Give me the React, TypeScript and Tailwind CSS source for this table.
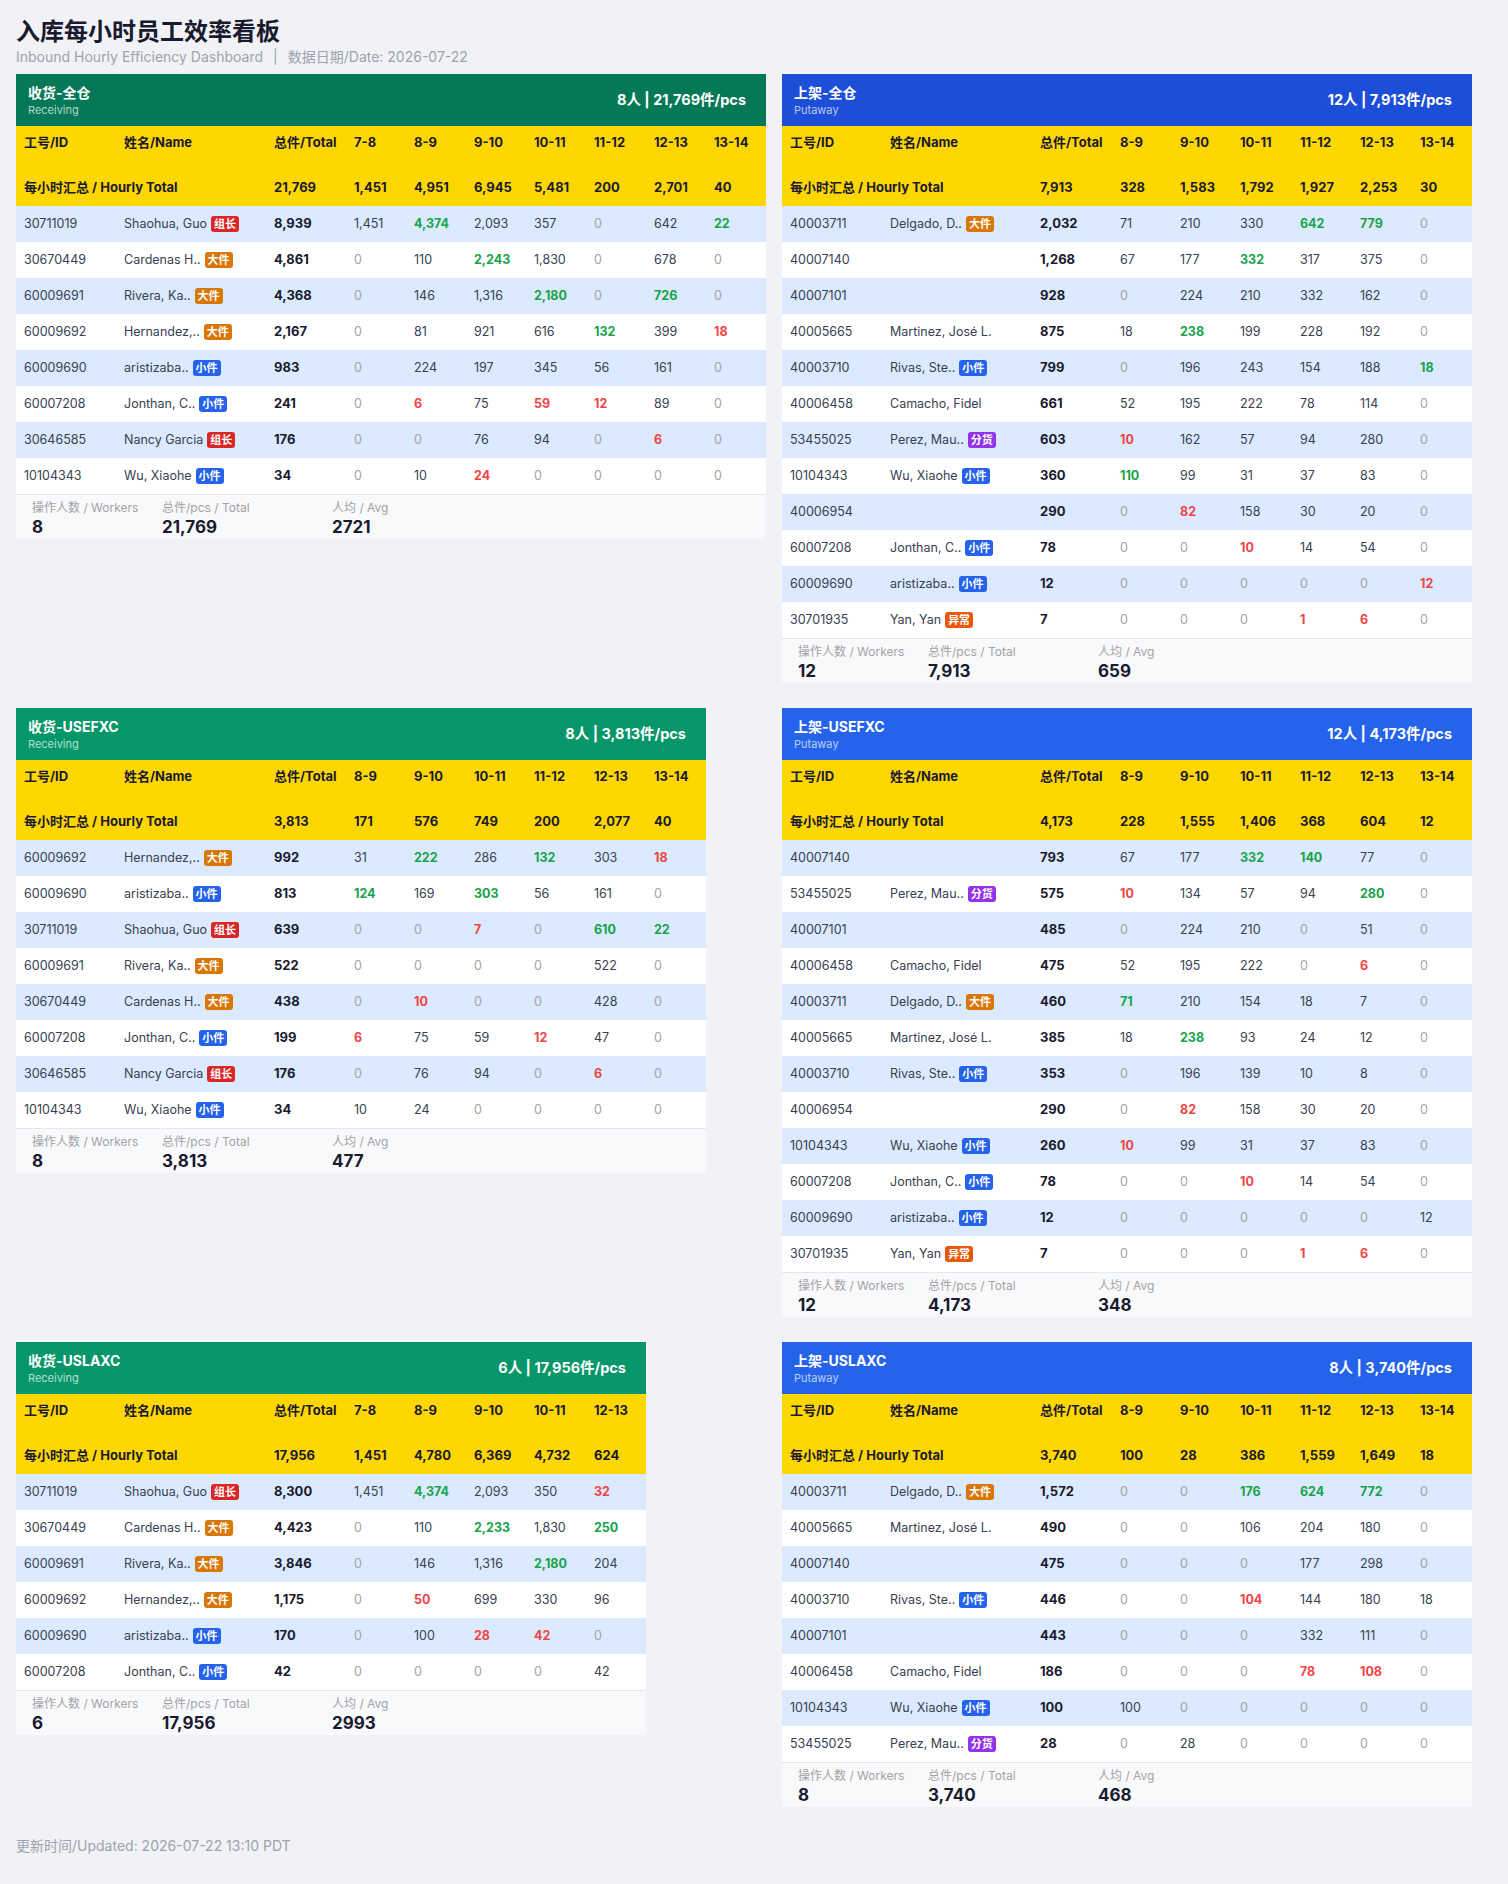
import React from "react";

type Row = { id: string; name: string; badge?: string; total: string; h: string[] };
type Card = {
  title: string;
  sub: string;
  head: string;
  right: string;
  hours: string[];
  totals: string[];
  grand: string;
  rows: Row[];
  workers: string;
  avg: string;
};

const BADGE: Record<string, string> = {
  组长: "bg-[#dc2626]",
  大件: "bg-[#d97706]",
  小件: "bg-[#2563eb]",
  分货: "bg-[#9333ea]",
  异常: "bg-[#ea580c]",
};

const H6 = ["8-9", "9-10", "10-11", "11-12", "12-13", "13-14"];

const cards: Card[] = [
  {
    title: "收货-全仓",
    sub: "Receiving",
    head: "bg-[#047857]",
    right: "8人 | 21,769件/pcs",
    hours: ["7-8", ...H6],
    grand: "21,769",
    totals: ["1,451", "4,951", "6,945", "5,481", "200", "2,701", "40"],
    rows: [
      { id: "30711019", name: "Shaohua, Guo", badge: "组长", total: "8,939", h: ["1,451", "4,374g", "2,093", "357", "0", "642", "22g"] },
      { id: "30670449", name: "Cardenas H..", badge: "大件", total: "4,861", h: ["0", "110", "2,243g", "1,830", "0", "678", "0"] },
      { id: "60009691", name: "Rivera, Ka..", badge: "大件", total: "4,368", h: ["0", "146", "1,316", "2,180g", "0", "726g", "0"] },
      { id: "60009692", name: "Hernandez,..", badge: "大件", total: "2,167", h: ["0", "81", "921", "616", "132g", "399", "18r"] },
      { id: "60009690", name: "aristizaba..", badge: "小件", total: "983", h: ["0", "224", "197", "345", "56", "161", "0"] },
      { id: "60007208", name: "Jonthan, C..", badge: "小件", total: "241", h: ["0", "6r", "75", "59r", "12r", "89", "0"] },
      { id: "30646585", name: "Nancy Garcia", badge: "组长", total: "176", h: ["0", "0", "76", "94", "0", "6r", "0"] },
      { id: "10104343", name: "Wu, Xiaohe", badge: "小件", total: "34", h: ["0", "10", "24r", "0", "0", "0", "0"] },
    ],
    workers: "8",
    avg: "2721",
  },
  {
    title: "上架-全仓",
    sub: "Putaway",
    head: "bg-[#1d4ed8]",
    right: "12人 | 7,913件/pcs",
    hours: H6,
    grand: "7,913",
    totals: ["328", "1,583", "1,792", "1,927", "2,253", "30"],
    rows: [
      { id: "40003711", name: "Delgado, D..", badge: "大件", total: "2,032", h: ["71", "210", "330", "642g", "779g", "0"] },
      { id: "40007140", name: "", total: "1,268", h: ["67", "177", "332g", "317", "375", "0"] },
      { id: "40007101", name: "", total: "928", h: ["0", "224", "210", "332", "162", "0"] },
      { id: "40005665", name: "Martinez, José L.", total: "875", h: ["18", "238g", "199", "228", "192", "0"] },
      { id: "40003710", name: "Rivas, Ste..", badge: "小件", total: "799", h: ["0", "196", "243", "154", "188", "18g"] },
      { id: "40006458", name: "Camacho, Fidel", total: "661", h: ["52", "195", "222", "78", "114", "0"] },
      { id: "53455025", name: "Perez, Mau..", badge: "分货", total: "603", h: ["10r", "162", "57", "94", "280", "0"] },
      { id: "10104343", name: "Wu, Xiaohe", badge: "小件", total: "360", h: ["110g", "99", "31", "37", "83", "0"] },
      { id: "40006954", name: "", total: "290", h: ["0", "82r", "158", "30", "20", "0"] },
      { id: "60007208", name: "Jonthan, C..", badge: "小件", total: "78", h: ["0", "0", "10r", "14", "54", "0"] },
      { id: "60009690", name: "aristizaba..", badge: "小件", total: "12", h: ["0", "0", "0", "0", "0", "12r"] },
      { id: "30701935", name: "Yan, Yan", badge: "异常", total: "7", h: ["0", "0", "0", "1r", "6r", "0"] },
    ],
    workers: "12",
    avg: "659",
  },
  {
    title: "收货-USEFXC",
    sub: "Receiving",
    head: "bg-[#059669]",
    right: "8人 | 3,813件/pcs",
    hours: H6,
    grand: "3,813",
    totals: ["171", "576", "749", "200", "2,077", "40"],
    rows: [
      { id: "60009692", name: "Hernandez,..", badge: "大件", total: "992", h: ["31", "222g", "286", "132g", "303", "18r"] },
      { id: "60009690", name: "aristizaba..", badge: "小件", total: "813", h: ["124g", "169", "303g", "56", "161", "0"] },
      { id: "30711019", name: "Shaohua, Guo", badge: "组长", total: "639", h: ["0", "0", "7r", "0", "610g", "22g"] },
      { id: "60009691", name: "Rivera, Ka..", badge: "大件", total: "522", h: ["0", "0", "0", "0", "522", "0"] },
      { id: "30670449", name: "Cardenas H..", badge: "大件", total: "438", h: ["0", "10r", "0", "0", "428", "0"] },
      { id: "60007208", name: "Jonthan, C..", badge: "小件", total: "199", h: ["6r", "75", "59", "12r", "47", "0"] },
      { id: "30646585", name: "Nancy Garcia", badge: "组长", total: "176", h: ["0", "76", "94", "0", "6r", "0"] },
      { id: "10104343", name: "Wu, Xiaohe", badge: "小件", total: "34", h: ["10", "24", "0", "0", "0", "0"] },
    ],
    workers: "8",
    avg: "477",
  },
  {
    title: "上架-USEFXC",
    sub: "Putaway",
    head: "bg-[#2563eb]",
    right: "12人 | 4,173件/pcs",
    hours: H6,
    grand: "4,173",
    totals: ["228", "1,555", "1,406", "368", "604", "12"],
    rows: [
      { id: "40007140", name: "", total: "793", h: ["67", "177", "332g", "140g", "77", "0"] },
      { id: "53455025", name: "Perez, Mau..", badge: "分货", total: "575", h: ["10r", "134", "57", "94", "280g", "0"] },
      { id: "40007101", name: "", total: "485", h: ["0", "224", "210", "0", "51", "0"] },
      { id: "40006458", name: "Camacho, Fidel", total: "475", h: ["52", "195", "222", "0", "6r", "0"] },
      { id: "40003711", name: "Delgado, D..", badge: "大件", total: "460", h: ["71g", "210", "154", "18", "7", "0"] },
      { id: "40005665", name: "Martinez, José L.", total: "385", h: ["18", "238g", "93", "24", "12", "0"] },
      { id: "40003710", name: "Rivas, Ste..", badge: "小件", total: "353", h: ["0", "196", "139", "10", "8", "0"] },
      { id: "40006954", name: "", total: "290", h: ["0", "82r", "158", "30", "20", "0"] },
      { id: "10104343", name: "Wu, Xiaohe", badge: "小件", total: "260", h: ["10r", "99", "31", "37", "83", "0"] },
      { id: "60007208", name: "Jonthan, C..", badge: "小件", total: "78", h: ["0", "0", "10r", "14", "54", "0"] },
      { id: "60009690", name: "aristizaba..", badge: "小件", total: "12", h: ["0", "0", "0", "0", "0", "12"] },
      { id: "30701935", name: "Yan, Yan", badge: "异常", total: "7", h: ["0", "0", "0", "1r", "6r", "0"] },
    ],
    workers: "12",
    avg: "348",
  },
  {
    title: "收货-USLAXC",
    sub: "Receiving",
    head: "bg-[#059669]",
    right: "6人 | 17,956件/pcs",
    hours: ["7-8", "8-9", "9-10", "10-11", "12-13"],
    grand: "17,956",
    totals: ["1,451", "4,780", "6,369", "4,732", "624"],
    rows: [
      { id: "30711019", name: "Shaohua, Guo", badge: "组长", total: "8,300", h: ["1,451", "4,374g", "2,093", "350", "32r"] },
      { id: "30670449", name: "Cardenas H..", badge: "大件", total: "4,423", h: ["0", "110", "2,233g", "1,830", "250g"] },
      { id: "60009691", name: "Rivera, Ka..", badge: "大件", total: "3,846", h: ["0", "146", "1,316", "2,180g", "204"] },
      { id: "60009692", name: "Hernandez,..", badge: "大件", total: "1,175", h: ["0", "50r", "699", "330", "96"] },
      { id: "60009690", name: "aristizaba..", badge: "小件", total: "170", h: ["0", "100", "28r", "42r", "0"] },
      { id: "60007208", name: "Jonthan, C..", badge: "小件", total: "42", h: ["0", "0", "0", "0", "42"] },
    ],
    workers: "6",
    avg: "2993",
  },
  {
    title: "上架-USLAXC",
    sub: "Putaway",
    head: "bg-[#2563eb]",
    right: "8人 | 3,740件/pcs",
    hours: H6,
    grand: "3,740",
    totals: ["100", "28", "386", "1,559", "1,649", "18"],
    rows: [
      { id: "40003711", name: "Delgado, D..", badge: "大件", total: "1,572", h: ["0", "0", "176g", "624g", "772g", "0"] },
      { id: "40005665", name: "Martinez, José L.", total: "490", h: ["0", "0", "106", "204", "180", "0"] },
      { id: "40007140", name: "", total: "475", h: ["0", "0", "0", "177", "298", "0"] },
      { id: "40003710", name: "Rivas, Ste..", badge: "小件", total: "446", h: ["0", "0", "104r", "144", "180", "18"] },
      { id: "40007101", name: "", total: "443", h: ["0", "0", "0", "332", "111", "0"] },
      { id: "40006458", name: "Camacho, Fidel", total: "186", h: ["0", "0", "0", "78r", "108r", "0"] },
      { id: "10104343", name: "Wu, Xiaohe", badge: "小件", total: "100", h: ["100", "0", "0", "0", "0", "0"] },
      { id: "53455025", name: "Perez, Mau..", badge: "分货", total: "28", h: ["0", "28", "0", "0", "0", "0"] },
    ],
    workers: "8",
    avg: "468",
  },
];

function HourCell({ v }: { v: string }) {
  const last = v.slice(-1);
  if (last === "g") return <td className="w-[60px] px-2 font-bold text-[#16a34a]">{v.slice(0, -1)}</td>;
  if (last === "r") return <td className="w-[60px] px-2 font-bold text-[#ef4444]">{v.slice(0, -1)}</td>;
  if (v === "0") return <td className="w-[60px] px-2 text-[#a3a3a3]">0</td>;
  return <td className="w-[60px] px-2 text-[#374151]">{v}</td>;
}

function CardView({ c }: { c: Card }) {
  return (
    <div className="w-fit bg-white">
      <div className={`${c.head} flex h-[52px] items-center justify-between pl-3 pr-5 text-white`}>
        <div className="flex flex-col">
          <div className="text-[14px] font-bold leading-[20px]">{c.title}</div>
          <div className="text-[11px] leading-[15px] text-white/70">{c.sub}</div>
        </div>
        <div className="text-[14.5px] font-bold">{c.right}</div>
      </div>
      <table className="border-collapse text-left text-[13px]">
        <thead>
          <tr className="h-[44px] bg-[#ffd700] text-[#1a1a2e]">
            <th className="w-[100px] px-2 pt-[7px] align-top font-bold">工号/ID</th>
            <th className="w-[150px] px-2 pt-[7px] align-top font-bold">姓名/Name</th>
            <th className="w-[80px] whitespace-nowrap px-2 pt-[7px] align-top font-bold">总件/Total</th>
            {c.hours.map((h) => (
              <th key={h} className="w-[60px] px-2 pt-[7px] align-top font-bold">
                {h}
              </th>
            ))}
          </tr>
          <tr className="h-9 bg-[#ffd700] font-bold text-[#1a1a2e]">
            <td colSpan={2} className="px-2">
              每小时汇总 / Hourly Total
            </td>
            <td className="px-2">{c.grand}</td>
            {c.totals.map((t, i) => (
              <td key={i} className="px-2">
                {t}
              </td>
            ))}
          </tr>
        </thead>
        <tbody className="text-[12.5px]">
          {c.rows.map((r, i) => (
            <tr key={i} className={`h-9 ${i % 2 === 0 ? "bg-[#dbeafe]" : "bg-white"}`}>
              <td className="px-2 text-[#374151]">{r.id}</td>
              <td className="whitespace-nowrap px-2 text-[#374151]">
                {r.name}
                {r.badge && (
                  <span
                    className={`${BADGE[r.badge]} ml-[4px] inline-block rounded-[3px] px-[3px] align-middle text-[11px] font-bold leading-[16px] text-white`}
                  >
                    {r.badge}
                  </span>
                )}
              </td>
              <td className="px-2 text-[13px] font-bold text-[#1a1a2e]">{r.total}</td>
              {r.h.map((v, j) => (
                <HourCell key={j} v={v} />
              ))}
            </tr>
          ))}
        </tbody>
      </table>
      <div className="flex border-t border-[#e5e7eb] bg-[#f8f9fb] px-4 pb-[1px] pt-[4px]">
        <div className="w-[130px]">
          <div className="text-[12px] leading-[17px] text-[#a3a3a3]">操作人数 / Workers</div>
          <div className="text-[17px] font-bold leading-[22px] text-[#1a1a2e]">{c.workers}</div>
        </div>
        <div className="w-[170px]">
          <div className="text-[12px] leading-[17px] text-[#a3a3a3]">总件/pcs / Total</div>
          <div className="text-[17px] font-bold leading-[22px] text-[#1a1a2e]">{c.grand}</div>
        </div>
        <div>
          <div className="text-[12px] leading-[17px] text-[#a3a3a3]">人均 / Avg</div>
          <div className="text-[17px] font-bold leading-[22px] text-[#1a1a2e]">{c.avg}</div>
        </div>
      </div>
    </div>
  );
}

export default function App() {
  return (
    <div className="min-h-screen bg-[#f0f2f5] px-4 pt-4 pb-6 font-['Inter','Noto_Sans_CJK_SC',sans-serif]">
      <h1 className="text-[24px] font-bold leading-[32px] text-[#1a1a2e]">入库每小时员工效率看板</h1>
      <div className="text-[14px] leading-[18px] text-[#9ca3af]">
        Inbound Hourly Efficiency Dashboard<span className="mx-[10px]">|</span>数据日期/Date: 2026-07-22
      </div>
      <div className="mt-2 grid grid-cols-[auto_auto] items-start justify-start gap-x-4 gap-y-[25px]">
        {cards.map((c) => (
          <CardView key={c.title} c={c} />
        ))}
      </div>
      <div className="mt-[30px] text-[14px] leading-[18px] text-[#9ca3af]">更新时间/Updated: 2026-07-22 13:10 PDT</div>
    </div>
  );
}
